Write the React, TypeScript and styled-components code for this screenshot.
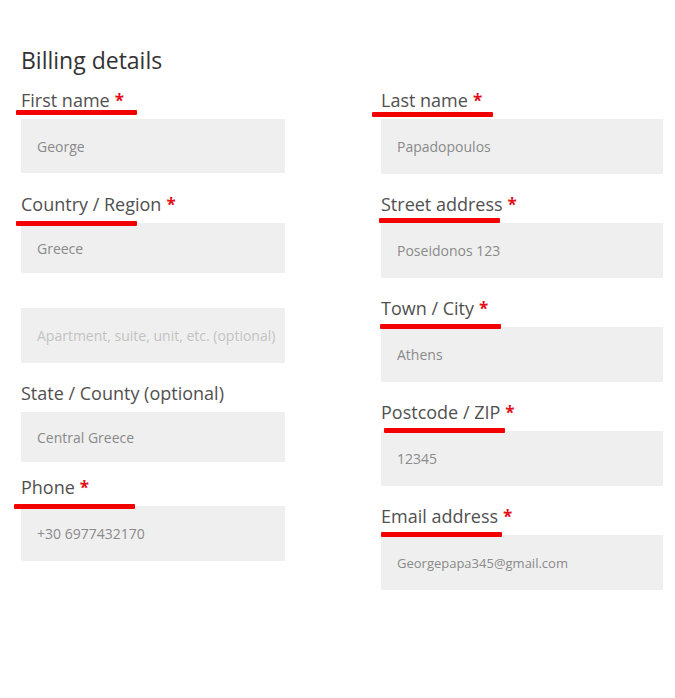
import React from "react";
import styled, { createGlobalStyle } from "styled-components";

const Global = createGlobalStyle`
  html, body { margin: 0; padding: 0; background: #ffffff; }
  * { box-sizing: border-box; }
`;

const Page = styled.div`
  width: 675px;
  min-height: 698px;
  padding: 47px 0 0 21px;
  font-family: "Open Sans", "Liberation Sans", sans-serif;
  background: #ffffff;
`;

const Heading = styled.h3`
  margin: 0 0 14px 0;
  font-size: 23px;
  line-height: 27px;
  font-weight: 400;
  color: #333333;
`;

const Columns = styled.div`
  display: flex;
  align-items: flex-start;
  gap: 96px;
`;

const Column = styled.div<{ $width: number }>`
  display: flex;
  flex-direction: column;
  width: ${(p) => p.$width}px;
`;

const Field = styled.div<{ $space: number }>`
  position: relative;
  display: flex;
  flex-direction: column;
  margin-top: ${(p) => p.$space}px;
`;

const Label = styled.label`
  display: block;
  height: 24px;
  margin-bottom: 7px;
  font-size: 18px;
  line-height: 24px;
  color: #505050;
  white-space: nowrap;
`;

const Required = styled.span`
  color: #e3101a;
  font-weight: 700;
  font-size: 17px;
  line-height: 0;
  margin-left: 5px;
`;

const Underline = styled.span<{ $x: number; $y: number }>`
  position: absolute;
  left: ${(p) => p.$x}px;
  top: ${(p) => p.$y}px;
  width: 121px;
  height: 5px;
  background: #f30000;
  border-radius: 1px;
  z-index: 2;
`;

const Input = styled.input<{ $h: number; $size?: number }>`
  display: block;
  width: 100%;
  height: ${(p) => p.$h}px;
  border: none;
  outline: none;
  margin: 0;
  padding: 0 0 0 16px;
  background: #efefef;
  color: #8a8a8a;
  font-family: "Open Sans", "Liberation Sans", sans-serif;
  font-size: ${(p) => p.$size ?? 14}px;
  &::placeholder {
    color: #c3c3c3;
  }
`;

type FieldDef = {
  label?: string;
  required?: boolean;
  value?: string;
  placeholder?: string;
  h: number;
  space: number;
  ux?: number;
  uy?: number;
  size?: number;
};

const left: FieldDef[] = [
  { label: "First name", required: true, value: "George", h: 54, space: 0, ux: -5, uy: 22 },
  { label: "Country / Region", required: true, value: "Greece", h: 50, space: 19, ux: -5, uy: 29 },
  { placeholder: "Apartment, suite, unit, etc. (optional)", h: 55, space: 35 },
  { label: "State / County (optional)", value: "Central Greece", h: 50, space: 18 },
  { label: "Phone", required: true, value: "+30 6977432170", h: 55, space: 13, ux: -7, uy: 29 },
];

const right: FieldDef[] = [
  { label: "Last name", required: true, value: "Papadopoulos", h: 55, space: 0, ux: -9, uy: 24 },
  { label: "Street address", required: true, value: "Poseidonos 123", h: 55, space: 18, ux: -2, uy: 26 },
  { label: "Town / City", required: true, value: "Athens", h: 55, space: 18, ux: -1, uy: 28 },
  { label: "Postcode / ZIP", required: true, value: "12345", h: 55, space: 18, ux: 3, uy: 28 },
  { label: "Email address", required: true, value: "Georgepapa345@gmail.com", h: 55, space: 18, ux: 0, uy: 28, size: 13 },
];

function FormField({ f }: { f: FieldDef }) {
  return (
    <Field $space={f.space}>
      {f.label && (
        <Label>
          {f.label}
          {f.required && <Required>*</Required>}
        </Label>
      )}
      {f.ux !== undefined && f.uy !== undefined && <Underline $x={f.ux} $y={f.uy} />}
      <Input
        $h={f.h}
        $size={f.size}
        readOnly
        value={f.value}
        placeholder={f.placeholder}
      />
    </Field>
  );
}

export default function App() {
  return (
    <>
      <Global />
      <Page>
        <Heading>Billing details</Heading>
        <Columns>
          <Column $width={264}>
            {left.map((f, i) => (
              <FormField key={i} f={f} />
            ))}
          </Column>
          <Column $width={282}>
            {right.map((f, i) => (
              <FormField key={i} f={f} />
            ))}
          </Column>
        </Columns>
      </Page>
    </>
  );
}
